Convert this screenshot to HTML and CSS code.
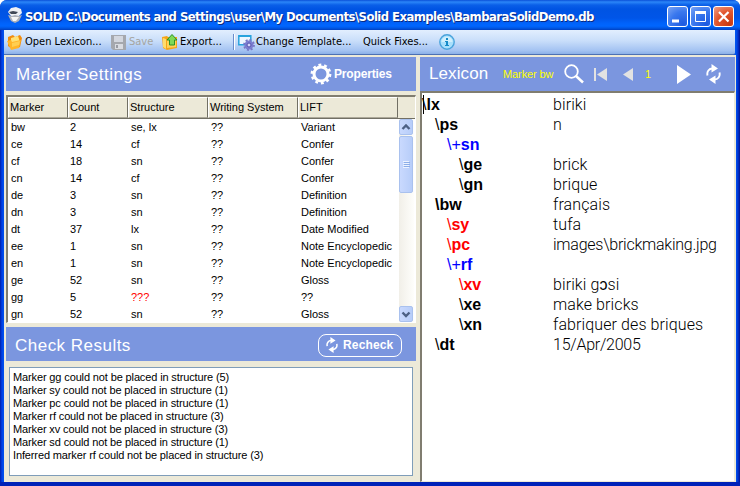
FILE: index.html
```html
<!DOCTYPE html>
<html lang="en">
<head>
<meta charset="utf-8">
<title>SOLID</title>
<link rel="stylesheet" href="styles.css">
</head>
<body>
<svg width="0" height="0" class="defs">
  <symbol id="refresh" viewBox="0 0 15 20">
    <path d="M1.500 11.500C.6 7.500 3 4.500 6.500 4.500M13.500 8.500c.9 4-1.500 7-5 7" fill="none" stroke="currentColor" stroke-width="1.900"/>
    <path d="M5.500 0 12 4.500 5.500 8.500zM9.500 11.500 3 15.500 9.500 20z" fill="currentColor"/>
  </symbol>
</svg>
<div class="window">
  <header class="title">
    <svg class="app" width="16" height="18" viewBox="0 0 16 18"><path d="M1 5 4 1l5-1 5 2 1 4-3 3H4z" fill="#eef0f4"/><path d="M2 5l4-1 5 1-2 2H4z" fill="#404856"/><path d="M1 8l4 1 3-1 4 1 3-1-3 6-4 2-4-2z" fill="#aeb2ba"/><path d="M4 10h8l-3 4H6z" fill="#f6f6f6"/></svg>
    <h1>SOLID C:\Documents and Settings\user\My Documents\Solid Examples\BambaraSolidDemo.db</h1>
    <div class="caps">
      <span class="cap"><svg width="19" height="19"><path d="M4 14h7" stroke="#fff" stroke-width="3"/></svg></span>
      <span class="cap"><svg width="19" height="19"><path d="M4.500 5v9.500h10V5" fill="none" stroke="#fff"/><path d="M4 5.500h11" stroke="#fff" stroke-width="3"/></svg></span>
      <span class="cap close"><svg width="19" height="19"><path d="M5 5l9.500 9.500M14.500 5 5 14.500" stroke="#fff" stroke-width="2.200"/></svg></span>
    </div>
  </header>
  <nav class="toolbar">
    <svg class="t-open" width="16" height="16"><path d="M1 3l5-2 2 2 5-2 2 3-2 9-8 2-4-3z" fill="#f28c0c"/><path d="M4 4l7-2 2 6-9 2z" fill="#ffe276"/><path d="M0 7l4-1 1 2 9-2-2 8-8 2z" fill="#ffb52a"/><path d="M5 9l8-2-1 4-7 2z" fill="#ffcf52"/></svg>
    <span class="w-open">Open Lexicon...</span>
    <svg class="t-save" width="15" height="15"><path d="M0 0h15v15H2l-2-2z" fill="#a5a8ae"/><path d="M3 1h9v6H3z" fill="#d3d7df"/><path d="M4 9h8v5H4z" fill="#d9dce2"/><path d="M5 10h2v3H5z" fill="#999ca4"/></svg>
    <span class="w-save">Save</span>
    <svg class="t-export" width="16" height="16"><path d="M0 3l5-1 1 1h9v11l-10 2-4-2z" fill="#f5a518"/><path d="M1 4l3 1v10l-3-2z" fill="#ffdc6b"/><path d="M5 6h9v7l-9 1z" fill="#ffd257"/><path d="M10 .5 15 6h-2.500v5h-5V6H5z" fill="#7ed957" stroke="#299326"/></svg>
    <span class="w-export">Export...</span>
    <i class="sep"></i>
    <svg class="t-template" width="17" height="17"><path d="M.8 1.800h12v9H.8z" fill="#edf7ff" stroke="#28a3dd" stroke-width="1.500"/><path d="M1 2h12" stroke="#28a3dd" stroke-width="2"/><circle cx="11" cy="11" r="4.500" fill="#7b7dd0"/><circle cx="11" cy="11" r="5" fill="none" stroke="#7776c7" stroke-width="1.800" stroke-dasharray="2 1.900"/><circle cx="11" cy="11" r="2" fill="#d5d5fa" stroke="#5553ae"/></svg>
    <span class="w-template">Change Template...</span>
    <span class="w-quick">Quick Fixes...</span>
    <svg class="t-info" width="16" height="16"><circle cx="8" cy="8" r="7.200" fill="#a9e0fc" stroke="#4aa3dc" stroke-width="1.400"/><path d="M2.500 8a5.500 5.500 0 0 1 11 0z" fill="#d0effd"/><path d="M7 4h2v2H7zM6 7h3v4h1v1H6v-1h1V8H6z" fill="#168bc8"/></svg>
  </nav>
  <main>
    <section class="left">
      <div class="head markers"><h2>Marker Settings</h2>
        <div class="props"><svg width="22" height="22"><circle cx="11" cy="11" r="7" fill="none" stroke="#fff" stroke-width="3"/><circle cx="11" cy="11" r="9.200" fill="none" stroke="#fff" stroke-width="2.400" stroke-dasharray="2.890 2.890"/></svg><b>Properties</b></div>
      </div>
      <div class="grid">
        <div class="row cols"><span>Marker</span><span>Count</span><span>Structure</span><span>Writing System</span><span>LIFT</span></div>
        <div class="gridbody">
          <div class="rows">
            <div class="row"><span>bw</span><span>2</span><span>se, lx</span><span>??</span><span>Variant</span></div>
            <div class="row"><span>ce</span><span>14</span><span>cf</span><span>??</span><span>Confer</span></div>
            <div class="row"><span>cf</span><span>18</span><span>sn</span><span>??</span><span>Confer</span></div>
            <div class="row"><span>cn</span><span>14</span><span>cf</span><span>??</span><span>Confer</span></div>
            <div class="row"><span>de</span><span>3</span><span>sn</span><span>??</span><span>Definition</span></div>
            <div class="row"><span>dn</span><span>3</span><span>sn</span><span>??</span><span>Definition</span></div>
            <div class="row"><span>dt</span><span>37</span><span>lx</span><span>??</span><span>Date Modified</span></div>
            <div class="row"><span>ee</span><span>1</span><span>sn</span><span>??</span><span>Note Encyclopedic</span></div>
            <div class="row"><span>en</span><span>1</span><span>sn</span><span>??</span><span>Note Encyclopedic</span></div>
            <div class="row"><span>ge</span><span>52</span><span>sn</span><span>??</span><span>Gloss</span></div>
            <div class="row"><span>gg</span><span>5</span><span class="red">???</span><span>??</span><span>??</span></div>
            <div class="row"><span>gn</span><span>52</span><span>sn</span><span>??</span><span>Gloss</span></div>
          </div>
          <div class="scroll">
            <svg class="sb" width="14" height="16"><path d="M2.500 9 6 5.500 9.500 9" fill="none" stroke="#4d6185" stroke-width="2.400"/></svg>
            <svg class="thumb" width="14" height="57"><path d="M3 24.500h6M3 26.500h6M3 28.500h6M3 30.500h6" stroke="#edf3ff"/><path d="M4 25.500h6M4 27.500h6M4 29.500h6" stroke="#8caee8"/></svg>
            <svg class="sb down" width="14" height="16"><path d="M2.500 5.500 6 9 9.500 5.500" fill="none" stroke="#4d6185" stroke-width="2.400"/></svg>
          </div>
        </div>
      </div>
      <div class="head results"><h2>Check Results</h2>
        <div class="recheck"><svg width="12" height="16"><use href="#refresh"/></svg><b>Recheck</b></div>
      </div>
      <div class="list">
        <p>Marker gg could not be placed in structure (5)</p>
        <p>Marker sy could not be placed in structure (1)</p>
        <p>Marker pc could not be placed in structure (1)</p>
        <p>Marker rf could not be placed in structure (3)</p>
        <p>Marker xv could not be placed in structure (3)</p>
        <p>Marker sd could not be placed in structure (1)</p>
        <p>Inferred marker rf could not be placed in structure (3)</p>
      </div>
    </section>
    <section class="right">
      <div class="head lexicon"><h2>Lexicon</h2><span class="filter">Marker bw</span>
        <svg class="find" width="21" height="20"><circle cx="7.500" cy="7.500" r="6.300" fill="none" stroke="#fff" stroke-width="1.800"/><path d="M12 12l7 6.500" stroke="#fff" stroke-width="2.500"/></svg>
        <svg class="first" width="14" height="13"><path d="M1 0v13" stroke="#e2e2e2" stroke-width="2"/><path d="M13 0v13L3 6.500z" fill="#e2e2e2"/></svg>
        <svg class="prev" width="10" height="13"><path d="M10 0v13L0 6.500z" fill="#e2e2e2"/></svg>
        <span class="num">1</span>
        <svg class="next" width="14" height="19"><path d="M0 0v19l14-9.500z" fill="#fff"/></svg>
        <svg class="again" width="15" height="20"><use href="#refresh"/></svg>
      </div>
      <div class="editor">
        <div class="entry"><b class="d0"><i class="caret"></i><s>\</s>lx</b><span>biriki</span></div>
        <div class="entry"><b class="d1"><s>\</s>ps</b><span>n</span></div>
        <div class="entry"><b class="d2 blue"><s>\+</s>sn</b><span></span></div>
        <div class="entry"><b class="d3"><s>\</s>ge</b><span>brick</span></div>
        <div class="entry"><b class="d3"><s>\</s>gn</b><span>brique</span></div>
        <div class="entry"><b class="d1">\bw</b><span>français</span></div>
        <div class="entry"><b class="d2 red"><s>\</s>sy</b><span>tufa</span></div>
        <div class="entry"><b class="d2 red"><s>\</s>pc</b><span class="tight">images\brickmaking.jpg</span></div>
        <div class="entry"><b class="d2 blue"><s>\+</s>rf</b><span></span></div>
        <div class="entry"><b class="d3 red"><s>\</s>xv</b><span>biriki gɔsi</span></div>
        <div class="entry"><b class="d3"><s>\</s>xe</b><span>make bricks</span></div>
        <div class="entry"><b class="d3"><s>\</s>xn</b><span>fabriquer des briques</span></div>
        <div class="entry"><b class="d1"><s>\</s>dt</b><span class="tight">15/Apr/2005</span></div>
      </div>
    </section>
  </main>
</div>
</body>
</html>
```
FILE: styles.css
```css
* { box-sizing: border-box; }
body { margin: 0; background: #fff; font: 11px "Liberation Sans", sans-serif; color: #000; overflow: hidden; }
h1, h2, p { margin: 0; }
svg { display: block; flex: none; }
.defs { position: absolute; }
s, i { text-decoration: none; font-style: normal; }
.window { width: 740px; height: 486px; padding: 0 4px 4px; display: flex; flex-direction: column; overflow: hidden; border-radius: 7px 7px 0 0;
  background: linear-gradient(to right, #001ea8 0, #0042e8 2px, #0053ee 4px, #0053ee 736px, #0032d0 738px, #00128c 740px); box-shadow: inset 0 -4px #0022b8; }
.title { height: 30px; margin: 0 -4px; padding: 0 6px 0 7px; flex: none; display: flex; align-items: center;
  background: linear-gradient(#0a50d8 0, #2b86f8 2px, #0a5fe8 5px, #0054e3 9px, #0055e8 18px, #0062fa 23px, #0066ff 26px, #0058e6 28px, #0040c0 30px); }
.app { margin-top: 1px; }
h1 { margin: 4px 0 0 2px; font: bold 13px/18px "DejaVu Sans Condensed", sans-serif; letter-spacing: -0.58px; width: 590px; color: #fff; text-shadow: 1px 1px #0a2a80; white-space: nowrap; }
.caps { display: flex; gap: 2px; margin: 3px 0 0 auto; }
.cap { width: 21px; height: 21px; border: 1px solid #fff; border-radius: 3px; background: radial-gradient(circle at 80% 90%, #1e5ae0, #3a78ee 55%, #7ba4f4); }
.close { background: radial-gradient(circle at 80% 90%, #c83a10, #e2562e 55%, #f0a088); }
.toolbar { height: 25px; width: 731px; flex: none; display: flex; align-items: center; padding-left: 3px; font: 11px/16px "DejaVu Sans Condensed", sans-serif; white-space: nowrap;
  background: linear-gradient(#e2eefe, #c9defa 45%, #a4c3f2 85%, #8bb0e8); border-bottom: 1px solid #4b70b4; border-radius: 0 0 2px 0; }
.w-open { width: 86px; margin-left: 2px; }
.w-save { width: 33px; margin-left: 3px; color: #a5a5a0; }
.w-export { width: 53px; margin-left: 2px; }
.sep { width: 2px; height: 16px; margin-right: 3px; background: #6a8ccb; border-right: 1px solid #fff; }
.w-template { width: 107px; margin-left: 1px; }
.w-quick { width: 76px; }
main { flex: 1; min-height: 0; display: flex; gap: 4px; padding: 2px 1px 0 2px; background: #ece9d8; }
.left { width: 410px; flex: none; }
.right { flex: 1; display: flex; flex-direction: column; }
.head { height: 34px; flex: none; display: flex; align-items: center; background: #7b96df; color: #fff; }
h2 { font: 17px/22px "Liberation Sans", sans-serif; white-space: nowrap; }
.markers h2 { width: 294px; padding: 1px 0 0 10px; letter-spacing: .48px; }
.results h2 { width: 312px; padding: 4px 0 0 9px; letter-spacing: .48px; }
.props { display: flex; align-items: center; gap: 2px; padding-left: 10px; }
.props b { font-size: 12px; letter-spacing: -.15px; }
.recheck { width: 84px; height: 23px; margin-top: 2px; border: 1px solid #fff; border-radius: 8px; display: flex; align-items: center; gap: 5px; padding-left: 7px; }
.recheck b { font-size: 12px; letter-spacing: .15px; }
.grid { height: 228px; width: 410px; margin-top: 4px; border: solid; border-width: 2px 1px 1px 2px; border-color: #807d70 #fff #fff #807d70; background: #fff; }
.row { display: grid; grid-template-columns: 60px 60px 80px 90px 100px; height: 17px; line-height: 17px; white-space: nowrap; }
.row span { padding-left: 3px; }
.row span:nth-child(2) { padding-left: 2px; }
.cols { height: 22px; line-height: 19px; background: #ece9d8; border-bottom: 1px solid #716f64; }
.row.cols span { padding-left: 1px; border: solid; border-width: 1px 1px 1px; border-color: #fff #716f64 #aca899 #fff; }
.gridbody { display: flex; height: 203px; }
.rows { width: 391px; flex: none; }
.scroll { width: 15px; display: flex; flex-direction: column; background: linear-gradient(90deg, #f1efe8, #fefefb); }
.sb, .thumb { border: 1px solid #a9c1ee; border-radius: 2px; background: linear-gradient(90deg, #c9d9fe, #b7cdf9); }
.thumb { margin-top: 1px; }
.down { margin-top: auto; }
.red { color: #f00; }
.blue { color: #00f; }
.results { margin-top: 4px; }
.list { width: 404px; height: 109px; margin: 6px 0 0 3px; border: 1px solid #7f9db9; background: #fff; padding: 3px 3px; line-height: 13px; letter-spacing: -.13px; white-space: nowrap; }
.lexicon h2 { width: 83px; padding-left: 9px; letter-spacing: .1px; }
.filter { width: 61px; color: #ff0; white-space: nowrap; font-size: 11px; letter-spacing: -.1px; }
.first { margin-left: 9px; }
.prev { margin-left: 15px; }
.num { margin-left: 12px; width: 32px; color: #ff0; }
.again { margin-left: 15px; }
.editor { width: 315px; flex: 1; border: solid; border-width: 2px 1px 1px 2px; border-color: #807d70 #ece9d8 #ece9d8 #807d70; background: #fff; padding-top: 2px; }
.entry { display: grid; grid-template-columns: 131px 1fr; height: 20px; font: 16px/20px "Liberation Sans", sans-serif; white-space: nowrap; }
.entry span { font-family: Roboto, "Liberation Sans", sans-serif; font-weight: 300; letter-spacing: .1px; }
.entry .tight { letter-spacing: -.24px; }
.entry b { position: relative; }
.entry s { font-weight: normal; }
.d1 { padding-left: 13px; }
.d2 { padding-left: 25px; }
.d3 { padding-left: 37px; }
.caret { position: absolute; left: 1px; top: 0; width: 1px; height: 19px; background: #000; }
```
